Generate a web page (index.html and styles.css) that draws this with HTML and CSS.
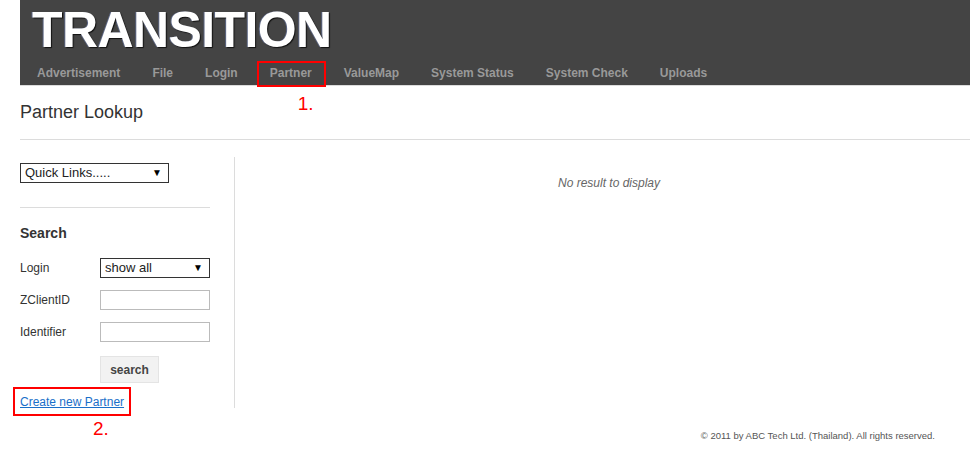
FILE: index.html
```html
<!DOCTYPE html>
<html>
<head>
<meta charset="utf-8">
<title>Partner Lookup</title>
<link rel="stylesheet" href="styles.css">
</head>
<body>
<div class="page">
  <header class="masthead">
    <h1 class="logo">TRANSITION</h1>
    <nav class="nav">
      <a href="#">Advertisement</a>
      <a href="#">File</a>
      <a href="#">Login</a>
      <a href="#" class="marked">Partner<span class="note note-1">1.</span></a>
      <a href="#">ValueMap</a>
      <a href="#">System Status</a>
      <a href="#">System Check</a>
      <a href="#">Uploads</a>
    </nav>
  </header>

  <h2 class="page-title">Partner Lookup</h2>
  <hr class="rule">

  <div class="main">
    <aside class="sidebar">
      <div class="select-wrap quick">
        <select class="select"><option>Quick Links.....</option></select>
      </div>
      <hr class="rule side-rule">
      <h3 class="search-title">Search</h3>
      <form class="search-form">
        <div class="row">
          <label class="label">Login</label>
          <div class="select-wrap field">
            <select class="select"><option>show all</option></select>
          </div>
        </div>
        <div class="row">
          <label class="label">ZClientID</label>
          <input class="input" type="text">
        </div>
        <div class="row">
          <label class="label">Identifier</label>
          <input class="input" type="text">
        </div>
        <div class="row">
          <span class="label"></span>
          <button class="button" type="button">search</button>
        </div>
      </form>
      <div class="create">
        <a href="#" class="create-link">Create new Partner</a>
        <span class="note note-2">2.</span>
      </div>
    </aside>
    <section class="content">
      <p class="empty">No result to display</p>
    </section>
  </div>

  <footer class="footer">© 2011 by ABC Tech Ltd. (Thailand). All rights reserved.</footer>
</div>
</body>
</html>
```

FILE: styles.css
```css
html, body {
  margin: 0;
  padding: 0;
  background: #fff;
}
body {
  font-family: "Liberation Sans", Arial, sans-serif;
  color: #333;
}
.page {
  width: 950px;
  margin-left: 20px;
}
.masthead {
  background: #444444;
  height: 85px;
  border-bottom: 1px solid #dcdcdc;
}
.logo {
  margin: 0;
  padding-left: 12px;
  height: 60px;
  font-size: 50px;
  line-height: 60px;
  font-weight: bold;
  color: #fff;
  letter-spacing: -0.6px;
  text-shadow: 1px 1px 1px #111, -1px 0 0 rgba(140, 170, 255, 0.35);
}
.nav {
  display: flex;
  height: 25px;
  padding-left: 1px;
}
.nav a {
  position: relative;
  display: block;
  padding: 1px 16px 0;
  height: 24px;
  line-height: 25px;
  font-size: 12px;
  font-weight: bold;
  color: #999;
  text-decoration: none;
}
.nav a.marked::after {
  content: "";
  position: absolute;
  left: 3px;
  right: 2px;
  top: 1px;
  bottom: -2px;
  border: 2px solid #f00;
}
.note {
  position: absolute;
  color: #f00;
  font-size: 19px;
  line-height: 18px;
  font-weight: normal;
  white-space: nowrap;
}
.note-1 {
  left: 44px;
  top: 35px;
}
.page-title {
  margin: 15px 0 0;
  font-size: 18px;
  line-height: 22px;
  font-weight: normal;
  color: #333;
}
.rule {
  margin: 16px 0 0;
  border: 0;
  border-top: 1px solid #dcdcdc;
  height: 0;
}
.main {
  display: flex;
  margin-top: 17px;
}
.sidebar {
  width: 190px;
  padding: 6px 24px 0 0;
  border-right: 1px solid #dcdcdc;
  height: 245px;
}
.select-wrap {
  position: relative;
  box-sizing: border-box;
  height: 20px;
}
.select-wrap::after {
  content: "▼";
  position: absolute;
  right: 7px;
  top: 4px;
  font-size: 10px;
  line-height: 12px;
  color: #000;
  pointer-events: none;
}
.quick {
  width: 149px;
}
.field {
  width: 110px;
}
.select {
  -webkit-appearance: none;
  appearance: none;
  box-sizing: border-box;
  width: 100%;
  height: 20px;
  margin: 0;
  padding: 0 0 0 4px;
  border: 1px solid #333;
  border-radius: 0;
  background: #fff;
  font-family: "Liberation Sans", Arial, sans-serif;
  font-size: 13px;
  line-height: 18px;
  color: #222;
}
.side-rule {
  margin-top: 24px;
}
.search-title {
  margin: 17px 0 0;
  font-size: 14px;
  line-height: 16px;
  font-weight: bold;
  color: #333;
}
.search-form {
  margin: 17px 0 0;
  display: flex;
  flex-direction: column;
  gap: 12px;
}
.row {
  display: flex;
  align-items: center;
}
.row:last-child {
  margin-top: 2px;
}
.label {
  width: 80px;
  font-size: 12px;
  color: #333;
}
.input {
  box-sizing: border-box;
  width: 110px;
  height: 20px;
  margin: 0;
  padding: 0 3px;
  border: 1px solid #bbb;
  border-radius: 0;
  background: #fff;
}
.button {
  box-sizing: border-box;
  width: 59px;
  height: 27px;
  margin: 0;
  padding: 0;
  border: 1px solid #e4e4e4;
  border-radius: 0;
  background: #f2f2f2;
  font-family: "Liberation Sans", Arial, sans-serif;
  font-size: 12px;
  font-weight: bold;
  color: #444;
}
.create {
  position: relative;
  margin-top: 11px;
  height: 14px;
  line-height: 14px;
}
.create-link {
  position: relative;
  font-size: 12px;
  color: #1a6fc9;
  text-decoration: underline;
}
.create-link::after {
  content: "";
  position: absolute;
  left: -7px;
  right: -7px;
  top: -8px;
  bottom: -7px;
  border: 2px solid #f00;
}
.note-2 {
  left: 73px;
  top: 26px;
}
.content {
  flex: 1;
  padding: 19px 0 0 13px;
}
.empty {
  margin: 0;
  text-align: center;
  font-size: 12px;
  line-height: 14px;
  font-style: italic;
  color: #666;
}
.footer {
  margin-top: 22px;
  padding-right: 35px;
  text-align: right;
  font-size: 9.5px;
  line-height: 12px;
  color: #555;
}
```
